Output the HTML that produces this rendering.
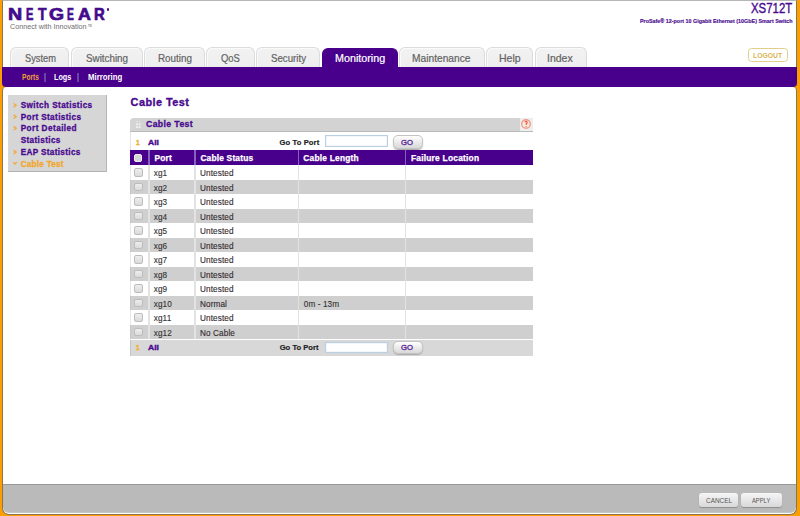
<!DOCTYPE html>
<html><head><meta charset="utf-8">
<style>
*{margin:0;padding:0;box-sizing:border-box}
html,body{width:800px;height:516px;overflow:hidden;background:#fc9d00;font-family:"Liberation Sans",sans-serif}
body{position:relative}
.abs{position:absolute}
.tx{position:absolute;white-space:nowrap;line-height:normal;transform-origin:0 0;font-family:"Liberation Sans",sans-serif}
.lg{position:absolute;top:4.7px;font:bold 16.4px "Liberation Sans",sans-serif;color:#440a8c;transform-origin:0 0;-webkit-text-stroke:0.7px #440a8c;line-height:normal}
.tab{position:absolute;top:47.2px;height:19.8px;background:linear-gradient(#f2f2f2,#eeeeee);border:1.4px solid #dcdcdc;border-bottom:none;border-radius:6px 6px 0 0;box-shadow:inset 1px 1px 0 #fafafa}
.tab.act{background:#48008c;border-color:#48008c;box-shadow:none;top:48px}
.cb{position:absolute;width:8.6px;height:8.4px;border:1px solid #bdbdbd;border-radius:2px;background:linear-gradient(#eeeeee,#dadada)}
.sep{position:absolute;width:1.4px;background:#e2e2e2}
.hsep{position:absolute;top:150.4px;width:1.4px;height:14.9px;background:#8462c0}
.inp{position:absolute;border:1px solid #bccfe2;background:#fff;box-shadow:inset 0 0 0 0.5px #e4eef8}
.go{position:absolute;border:1px solid #c4c4c4;border-radius:5px;background:linear-gradient(#ffffff,#d8d8d8);box-shadow:0 1px 1px #aaa}
.btn{position:absolute;top:493px;height:13.6px;border-radius:3px;background:linear-gradient(#f6f6f6,#d8d8d8);box-shadow:0 1px 1px #8e8e8e}
</style></head><body>
<div class="abs" style="left:2px;top:0;width:795px;height:69px;background:#fff;border-left:1px solid #8a7550;border-right:1px solid #8a7550;border-top:1.2px solid #b6b6b6"></div>
<div class="abs" style="left:2px;top:86.5px;width:795px;height:428px;background:#fff;border:1px solid #8a7550;border-top:none;border-radius:4px 4px 7px 7px"></div>
<div class="abs" style="left:2px;top:66.6px;width:795px;height:20.9px;background:#48008c;border-radius:0 0 4px 4px"></div>
<span class="lg" style="left:8.30px;transform:scaleX(1.200)">N</span><span class="lg" style="left:26.32px;transform:scaleX(0.675)">E</span><span class="lg" style="left:38.25px;transform:scaleX(0.850)">T</span><span class="lg" style="left:48.57px;transform:scaleX(1.182)">G</span><span class="lg" style="left:66.88px;transform:scaleX(0.625)">E</span><span class="lg" style="left:77.66px;transform:scaleX(1.091)">A</span><span class="lg" style="left:94.09px;transform:scaleX(0.909)">R</span><span class="abs" style="left:106.5px;top:8px;width:2.2px;height:2.5px;background:#4a0a96;border-radius:1px"></span>
<span class="tx" style="left:88px;top:23.6px;font-size:3.4px;color:#888;font-weight:bold;transform:scaleX(0.75);transform-origin:0 0">TM</span>
<div class="tab" style="left:10px;width:58.75px"></div><div class="tab" style="left:70.5px;width:72.0px"></div><div class="tab" style="left:144px;width:60.5px"></div><div class="tab" style="left:206px;width:49px"></div><div class="tab" style="left:255.5px;width:64.5px"></div><div class="tab act" style="left:322px;width:75.5px"></div><div class="tab" style="left:399px;width:85.5px"></div><div class="tab" style="left:486px;width:47px"></div><div class="tab" style="left:535px;width:51.75px"></div>
<div class="abs" style="left:747.5px;top:48.1px;width:40.5px;height:14.3px;border:1.6px solid #dfcf88;border-radius:3.5px"></div>
<div class="abs" style="left:44.2px;top:72.6px;width:1.4px;height:9px;background:#6a44a8"></div>
<div class="abs" style="left:77.4px;top:72.6px;width:1.4px;height:9px;background:#6a44a8"></div>

<div class="abs" style="left:8.3px;top:95.3px;width:98.9px;height:76.9px;background:#d6d6d6;border-right:1.4px solid #b4b4b4;border-bottom:1.6px solid #b2b2b2"></div>
<svg class="abs" style="left:0;top:0" width="120" height="180">
<g fill="none" stroke="#f2a838" stroke-width="1.3">
<path d="M13.6 103.5 L16.2 105.3 L13.6 107.1"/>
<path d="M13.6 114.9 L16.2 116.7 L13.6 118.5"/>
<path d="M13.6 126.4 L16.2 128.2 L13.6 130"/>
<path d="M13.6 150.3 L16.2 152.1 L13.6 153.9"/>
<path d="M13.3 162.3 L15 164 L16.7 162.3"/>
</g></svg>

<div class="abs" style="left:130px;top:118.2px;width:403px;height:14px;background:#d3d3d3;border-bottom:1.2px solid #bababa;border-radius:4px 0 0 0"></div>
<svg class="abs" style="left:130px;top:118px" width="403" height="14">
<g fill="#f6f6f6"><rect x="6.2" y="2.8" width="1.7" height="1.6" opacity="0.4"/><rect x="8.8" y="2.8" width="1.7" height="1.6" opacity="0.4"/><rect x="6.2" y="5.5" width="1.7" height="1.7"/><rect x="8.8" y="5.5" width="1.7" height="1.7"/><rect x="6.2" y="8.3" width="1.7" height="1.7"/><rect x="8.8" y="8.3" width="1.7" height="1.7"/></g>
<rect x="390" y="0" width="13" height="13" fill="#eeeeee"/>
<circle cx="396" cy="6" r="4.3" fill="#f6eedc" stroke="#f29a8c" stroke-width="1.4"/>
<path d="M394.9 4.4 Q395.1 3.3 396 3.3 Q397.2 3.3 397.2 4.4 Q397.2 5.2 396.2 5.8 L396.2 7.1 M396.2 8 L396.2 8.8" fill="none" stroke="#ea4c44" stroke-width="1.1"/>
</svg>
<div class="abs" style="left:130px;top:132px;width:1px;height:18.5px;background:#e4e4e4"></div>
<div class="inp" style="left:324.7px;top:135.4px;width:63px;height:11.7px"></div>
<div class="go" style="left:393px;top:135px;width:29.8px;height:13.6px"></div>

<div class="abs" style="left:130px;top:150.4px;width:403px;height:14.9px;background:#48008c"></div>
<i class="cb" style="left:134.1px;top:154px;width:7.9px;height:7.9px;background:#d6d6d6;border-color:#efefef"></i>
<div class="hsep" style="left:148.2px"></div>
<div class="hsep" style="left:194.3px"></div>
<div class="hsep" style="left:297.8px"></div>
<div class="hsep" style="left:404.8px"></div>
<div class="abs" style="left:130px;top:165.3px;width:403px;height:14.5px;background:#fff;border-left:1px solid #e8e8e8"></div><i class="cb" style="left:134.3px;top:168.4px"></i><div class="abs" style="left:130px;top:179.8px;width:403px;height:14.5px;background:#cfcfcf;border-left:1px solid #c6c6c6"></div><i class="cb" style="left:134.3px;top:182.9px"></i><div class="abs" style="left:130px;top:194.3px;width:403px;height:14.5px;background:#fff;border-left:1px solid #e8e8e8"></div><i class="cb" style="left:134.3px;top:197.4px"></i><div class="abs" style="left:130px;top:208.8px;width:403px;height:14.5px;background:#cfcfcf;border-left:1px solid #c6c6c6"></div><i class="cb" style="left:134.3px;top:211.9px"></i><div class="abs" style="left:130px;top:223.3px;width:403px;height:14.5px;background:#fff;border-left:1px solid #e8e8e8"></div><i class="cb" style="left:134.3px;top:226.4px"></i><div class="abs" style="left:130px;top:237.8px;width:403px;height:14.5px;background:#cfcfcf;border-left:1px solid #c6c6c6"></div><i class="cb" style="left:134.3px;top:240.9px"></i><div class="abs" style="left:130px;top:252.3px;width:403px;height:14.5px;background:#fff;border-left:1px solid #e8e8e8"></div><i class="cb" style="left:134.3px;top:255.4px"></i><div class="abs" style="left:130px;top:266.8px;width:403px;height:14.5px;background:#cfcfcf;border-left:1px solid #c6c6c6"></div><i class="cb" style="left:134.3px;top:269.90000000000003px"></i><div class="abs" style="left:130px;top:281.3px;width:403px;height:14.5px;background:#fff;border-left:1px solid #e8e8e8"></div><i class="cb" style="left:134.3px;top:284.40000000000003px"></i><div class="abs" style="left:130px;top:295.8px;width:403px;height:14.5px;background:#cfcfcf;border-left:1px solid #c6c6c6"></div><i class="cb" style="left:134.3px;top:298.90000000000003px"></i><div class="abs" style="left:130px;top:310.3px;width:403px;height:14.5px;background:#fff;border-left:1px solid #e8e8e8"></div><i class="cb" style="left:134.3px;top:313.40000000000003px"></i><div class="abs" style="left:130px;top:324.8px;width:403px;height:14.5px;background:#cfcfcf;border-left:1px solid #c6c6c6"></div><i class="cb" style="left:134.3px;top:327.90000000000003px"></i>
<div class="sep" style="left:148.2px;top:165.3px;height:174.2px"></div>
<div class="sep" style="left:194.3px;top:165.3px;height:174.2px"></div>
<div class="sep" style="left:297.8px;top:165.3px;height:174.2px"></div>
<div class="sep" style="left:404.8px;top:165.3px;height:174.2px"></div>
<div class="abs" style="left:130px;top:339.5px;width:403px;height:16.8px;background:#d8d8d8;border-left:1px solid #c4c4c4"></div>
<div class="inp" style="left:325px;top:341.6px;width:62.7px;height:11px"></div>
<div class="go" style="left:393px;top:340.6px;width:29.8px;height:13.6px"></div>

<div class="abs" style="left:3px;top:484.2px;width:793px;height:29.3px;background:#bababa;border-top:1px solid #999;border-bottom:1.5px solid #c2c6c6;border-radius:0 0 6px 6px"></div>
<div class="btn" style="left:699px;width:39.3px"></div>
<div class="btn" style="left:740.6px;width:41px"></div>
<span class="tx" style="left:9.70px;top:22.30px;font-weight:normal;font-size:7.7px;letter-spacing:0.000px;color:#6e6e6e;transform:scaleX(0.9329);">Connect with Innovation</span><span class="tx" style="left:750.60px;top:0.10px;font-weight:normal;font-size:14.6px;letter-spacing:0.000px;color:#4a0a90;transform:scaleX(0.7811);-webkit-text-stroke:0.4px #4a0a90">XS712T</span><span class="tx" style="left:640.00px;top:18.40px;font-weight:bold;font-size:6px;letter-spacing:0.000px;color:#4a0a90;transform:scaleX(0.8965);-webkit-text-stroke:0.15px #4a0a90">ProSafe&#174; 12-port 10 Gigabit Ethernet (10GbE) Smart Switch</span><span class="tx" style="left:24.60px;top:53.20px;font-weight:normal;font-size:10.4px;letter-spacing:0.000px;color:#636363;transform:scaleX(0.8941);-webkit-text-stroke:0.2px #636363">System</span><span class="tx" style="left:86.40px;top:53.20px;font-weight:normal;font-size:10.4px;letter-spacing:0.000px;color:#636363;transform:scaleX(0.9455);-webkit-text-stroke:0.2px #636363">Switching</span><span class="tx" style="left:157.55px;top:53.20px;font-weight:normal;font-size:10.4px;letter-spacing:0.000px;color:#636363;transform:scaleX(0.9471);-webkit-text-stroke:0.2px #636363">Routing</span><span class="tx" style="left:220.70px;top:53.20px;font-weight:normal;font-size:10.4px;letter-spacing:0.000px;color:#636363;transform:scaleX(0.9095);-webkit-text-stroke:0.2px #636363">QoS</span><span class="tx" style="left:270.50px;top:53.20px;font-weight:normal;font-size:10.4px;letter-spacing:0.000px;color:#636363;transform:scaleX(0.9316);-webkit-text-stroke:0.2px #636363">Security</span><span class="tx" style="left:334.67px;top:53.20px;font-weight:normal;font-size:10.4px;letter-spacing:0.000px;color:#fff;transform:scaleX(1.0340);-webkit-text-stroke:0.2px #fff">Monitoring</span><span class="tx" style="left:412.02px;top:53.20px;font-weight:normal;font-size:10.4px;letter-spacing:0.000px;color:#636363;transform:scaleX(0.9828);-webkit-text-stroke:0.2px #636363">Maintenance</span><span class="tx" style="left:498.79px;top:53.20px;font-weight:normal;font-size:10.4px;letter-spacing:0.000px;color:#636363;transform:scaleX(1.0100);-webkit-text-stroke:0.2px #636363">Help</span><span class="tx" style="left:547.49px;top:53.20px;font-weight:normal;font-size:10.4px;letter-spacing:0.000px;color:#636363;transform:scaleX(1.0083);-webkit-text-stroke:0.2px #636363">Index</span><span class="tx" style="left:21.75px;top:71.60px;font-weight:bold;font-size:9px;letter-spacing:0.000px;color:#f0a030;transform:scaleX(0.7326);">Ports</span><span class="tx" style="left:54.30px;top:71.60px;font-weight:bold;font-size:9px;letter-spacing:0.000px;color:#fff;transform:scaleX(0.8048);">Logs</span><span class="tx" style="left:87.70px;top:71.60px;font-weight:bold;font-size:9px;letter-spacing:0.000px;color:#fff;transform:scaleX(0.8641);">Mirroring</span><span class="tx" style="left:752.75px;top:52.40px;font-weight:bold;font-size:7px;letter-spacing:0.000px;color:#dcb454;transform:scaleX(0.9750);">LOGOUT</span><span class="tx" style="left:20.70px;top:101.30px;font-weight:bold;font-size:8.2px;letter-spacing:0.400px;color:#4a0a90;-webkit-text-stroke:0.3px #4a0a90">Switch Statistics</span><span class="tx" style="left:20.70px;top:112.70px;font-weight:bold;font-size:8.2px;letter-spacing:0.371px;color:#4a0a90;-webkit-text-stroke:0.3px #4a0a90">Port Statistics</span><span class="tx" style="left:20.70px;top:124.20px;font-weight:bold;font-size:8.2px;letter-spacing:0.450px;color:#4a0a90;-webkit-text-stroke:0.3px #4a0a90">Port Detailed</span><span class="tx" style="left:20.70px;top:136.40px;font-weight:bold;font-size:8.2px;letter-spacing:0.367px;color:#4a0a90;-webkit-text-stroke:0.3px #4a0a90">Statistics</span><span class="tx" style="left:20.70px;top:148.10px;font-weight:bold;font-size:8.2px;letter-spacing:0.331px;color:#4a0a90;-webkit-text-stroke:0.3px #4a0a90">EAP Statistics</span><span class="tx" style="left:20.70px;top:159.70px;font-weight:bold;font-size:8.2px;letter-spacing:0.233px;color:#f0a830;-webkit-text-stroke:0.3px #f0a830">Cable Test</span><span class="tx" style="left:130.60px;top:96.20px;font-weight:bold;font-size:10.9px;letter-spacing:0.456px;color:#4a0a90;-webkit-text-stroke:0.35px #4a0a90">Cable Test</span><span class="tx" style="left:146.00px;top:119.00px;font-weight:bold;font-size:8.7px;letter-spacing:0.378px;color:#4a0a90;-webkit-text-stroke:0.3px #4a0a90">Cable Test</span><span class="tx" style="left:135.60px;top:137.60px;font-weight:bold;font-size:7.6px;letter-spacing:0.000px;color:#f0b030;transform:scaleX(0.8500);-webkit-text-stroke:0.45px #f0b030">1</span><span class="tx" style="left:147.70px;top:137.60px;font-weight:bold;font-size:7.9px;letter-spacing:0.000px;color:#4a0a90;transform:scaleX(1.0800);-webkit-text-stroke:0.4px #4a0a90">All</span><span class="tx" style="left:279.50px;top:137.60px;font-weight:bold;font-size:7.6px;letter-spacing:0.111px;color:#222;-webkit-text-stroke:0.2px #222">Go To Port</span><span class="tx" style="left:136.00px;top:343.20px;font-weight:bold;font-size:7.6px;letter-spacing:0.000px;color:#f0b030;transform:scaleX(0.8500);-webkit-text-stroke:0.45px #f0b030">1</span><span class="tx" style="left:147.70px;top:343.20px;font-weight:bold;font-size:7.9px;letter-spacing:0.000px;color:#4a0a90;transform:scaleX(1.0800);-webkit-text-stroke:0.4px #4a0a90">All</span><span class="tx" style="left:279.70px;top:343.20px;font-weight:bold;font-size:7.6px;letter-spacing:0.011px;color:#222;-webkit-text-stroke:0.2px #222">Go To Port</span><span class="tx" style="left:154.50px;top:153.20px;font-weight:bold;font-size:8.4px;letter-spacing:0.167px;color:#fff;-webkit-text-stroke:0.25px #fff">Port</span><span class="tx" style="left:200.40px;top:153.20px;font-weight:bold;font-size:8.4px;letter-spacing:0.182px;color:#fff;-webkit-text-stroke:0.25px #fff">Cable Status</span><span class="tx" style="left:303.30px;top:153.20px;font-weight:bold;font-size:8.4px;letter-spacing:0.218px;color:#fff;-webkit-text-stroke:0.25px #fff">Cable Length</span><span class="tx" style="left:410.90px;top:153.20px;font-weight:bold;font-size:8.4px;letter-spacing:0.233px;color:#fff;-webkit-text-stroke:0.25px #fff">Failure Location</span><span class="tx" style="left:401.00px;top:137.70px;font-weight:normal;font-size:7.7px;letter-spacing:0.000px;color:#5a2a9a;-webkit-text-stroke:0.35px #5a2a9a">GO</span><span class="tx" style="left:401.00px;top:343.40px;font-weight:normal;font-size:7.7px;letter-spacing:0.000px;color:#5a2a9a;-webkit-text-stroke:0.35px #5a2a9a">GO</span><span class="tx" style="left:705.70px;top:496.90px;font-weight:normal;font-size:7.1px;letter-spacing:0.000px;color:#555;transform:scaleX(0.9069);">CANCEL</span><span class="tx" style="left:752.40px;top:496.90px;font-weight:normal;font-size:7.1px;letter-spacing:0.000px;color:#555;transform:scaleX(0.8182);">APPLY</span>
<span class="tx" style="left:153.75px;top:169.10px;font-size:8.2px;color:#333;letter-spacing:0.107px;-webkit-text-stroke:0.12px #333">xg1</span><span class="tx" style="left:200.00px;top:169.10px;font-size:8.2px;color:#332a2e;letter-spacing:0.107px;-webkit-text-stroke:0.12px #332a2e">Untested</span><span class="tx" style="left:153.75px;top:183.60px;font-size:8.2px;color:#333;letter-spacing:0.107px;-webkit-text-stroke:0.12px #333">xg2</span><span class="tx" style="left:200.00px;top:183.60px;font-size:8.2px;color:#332a2e;letter-spacing:0.107px;-webkit-text-stroke:0.12px #332a2e">Untested</span><span class="tx" style="left:153.75px;top:198.10px;font-size:8.2px;color:#333;letter-spacing:0.107px;-webkit-text-stroke:0.12px #333">xg3</span><span class="tx" style="left:200.00px;top:198.10px;font-size:8.2px;color:#332a2e;letter-spacing:0.107px;-webkit-text-stroke:0.12px #332a2e">Untested</span><span class="tx" style="left:153.75px;top:212.60px;font-size:8.2px;color:#333;letter-spacing:0.107px;-webkit-text-stroke:0.12px #333">xg4</span><span class="tx" style="left:200.00px;top:212.60px;font-size:8.2px;color:#332a2e;letter-spacing:0.107px;-webkit-text-stroke:0.12px #332a2e">Untested</span><span class="tx" style="left:153.75px;top:227.10px;font-size:8.2px;color:#333;letter-spacing:0.107px;-webkit-text-stroke:0.12px #333">xg5</span><span class="tx" style="left:200.00px;top:227.10px;font-size:8.2px;color:#332a2e;letter-spacing:0.107px;-webkit-text-stroke:0.12px #332a2e">Untested</span><span class="tx" style="left:153.75px;top:241.60px;font-size:8.2px;color:#333;letter-spacing:0.107px;-webkit-text-stroke:0.12px #333">xg6</span><span class="tx" style="left:200.00px;top:241.60px;font-size:8.2px;color:#332a2e;letter-spacing:0.107px;-webkit-text-stroke:0.12px #332a2e">Untested</span><span class="tx" style="left:153.75px;top:256.10px;font-size:8.2px;color:#333;letter-spacing:0.107px;-webkit-text-stroke:0.12px #333">xg7</span><span class="tx" style="left:200.00px;top:256.10px;font-size:8.2px;color:#332a2e;letter-spacing:0.107px;-webkit-text-stroke:0.12px #332a2e">Untested</span><span class="tx" style="left:153.75px;top:270.60px;font-size:8.2px;color:#333;letter-spacing:0.107px;-webkit-text-stroke:0.12px #333">xg8</span><span class="tx" style="left:200.00px;top:270.60px;font-size:8.2px;color:#332a2e;letter-spacing:0.107px;-webkit-text-stroke:0.12px #332a2e">Untested</span><span class="tx" style="left:153.75px;top:285.10px;font-size:8.2px;color:#333;letter-spacing:0.107px;-webkit-text-stroke:0.12px #333">xg9</span><span class="tx" style="left:200.00px;top:285.10px;font-size:8.2px;color:#332a2e;letter-spacing:0.107px;-webkit-text-stroke:0.12px #332a2e">Untested</span><span class="tx" style="left:153.75px;top:299.60px;font-size:8.2px;color:#333;letter-spacing:0.107px;-webkit-text-stroke:0.12px #333">xg10</span><span class="tx" style="left:200.00px;top:299.60px;font-size:8.2px;color:#332a2e;letter-spacing:0.107px;-webkit-text-stroke:0.12px #332a2e">Normal</span><span class="tx" style="left:303.75px;top:299.60px;font-size:8.2px;color:#333;letter-spacing:0.107px;-webkit-text-stroke:0.12px #333">0m - 13m</span><span class="tx" style="left:153.75px;top:314.10px;font-size:8.2px;color:#333;letter-spacing:0.107px;-webkit-text-stroke:0.12px #333">xg11</span><span class="tx" style="left:200.00px;top:314.10px;font-size:8.2px;color:#332a2e;letter-spacing:0.107px;-webkit-text-stroke:0.12px #332a2e">Untested</span><span class="tx" style="left:153.75px;top:328.60px;font-size:8.2px;color:#333;letter-spacing:0.107px;-webkit-text-stroke:0.12px #333">xg12</span><span class="tx" style="left:200.00px;top:328.60px;font-size:8.2px;color:#332a2e;letter-spacing:0.107px;-webkit-text-stroke:0.12px #332a2e">No Cable</span>
</body></html>
